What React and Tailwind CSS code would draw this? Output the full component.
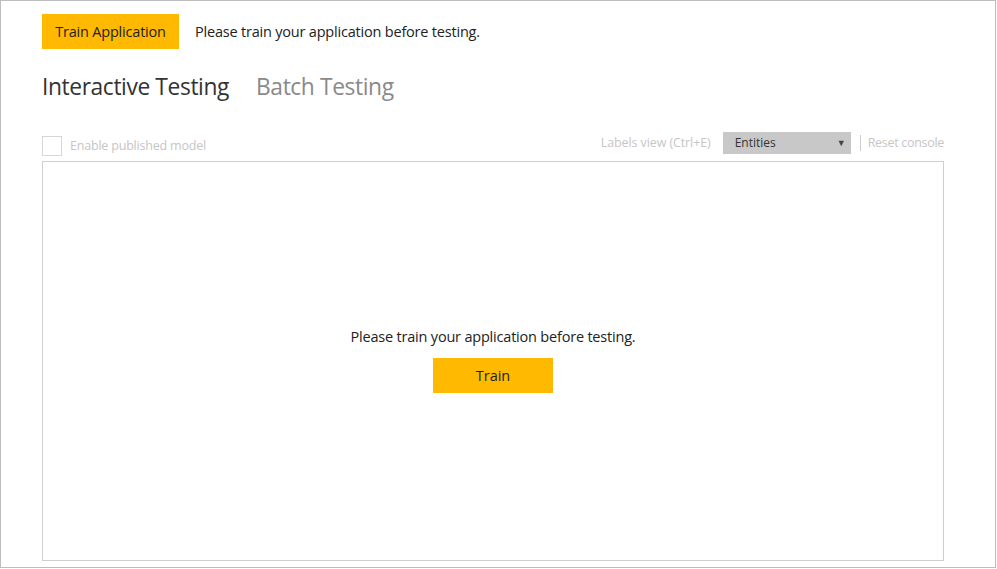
import React from 'react';

const font = { fontFamily: '"Open Sans", "Noto Sans", sans-serif' };

const App = () => {
  return (
    <div className="w-[997px] h-[569px] bg-white" style={font}>
      <div className="w-[996px] h-[568px] border border-[#bdbdbd] flex flex-col pl-[41px] pr-[51px]">
        {/* Train bar */}
        <div className="flex items-center mt-[13px] h-[35px]">
          <button className="h-[35px] w-[137px] bg-[#ffb900] text-[#222] text-[14.5px] tracking-[-0.2px]">
            Train Application
          </button>
          <span className="ml-[16px] text-[14.5px] text-[#222] tracking-[-0.2px]">
            Please train your application before testing.
          </span>
        </div>

        {/* Tabs */}
        <div className="flex items-baseline mt-[21px] h-[36px] text-[22.8px] tracking-[-0.4px]">
          <span className="text-[#333]">Interactive Testing</span>
          <span className="ml-[27px] text-[#8a8a8a]">Batch Testing</span>
        </div>

        {/* Toolbar */}
        <div className="flex items-center justify-between mt-[24px] h-[26px]">
          <div className="flex items-center mt-[6px]">
            <span className="w-[20px] h-[20px] border border-[#d6d6d6]"></span>
            <span className="ml-[8px] text-[12.5px] text-[#c6c6c6] tracking-[-0.2px]">Enable published model</span>
          </div>
          <div className="flex items-center">
            <span className="text-[12.5px] text-[#c6c6c6] tracking-[-0.1px]">Labels view (Ctrl+E)</span>
            <div className="ml-[12px] w-[128px] h-[22px] bg-[#c8c8c8] flex items-center justify-between pl-[12px] pr-[5px]">
              <span className="text-[12px] text-[#333]">Entities</span>
              <span className="text-[9px] text-[#444]">▼</span>
            </div>
            <span className="ml-[9px] w-px h-[16px] bg-[#cfcfcf]"></span>
            <span className="ml-[7px] text-[12.5px] text-[#c6c6c6] tracking-[-0.3px]">Reset console</span>
          </div>
        </div>

        {/* Console */}
        <div className="mt-[5px] h-[400px] border border-[#cfcfcf] flex flex-col items-center justify-center">
          <div className="flex flex-col items-center mb-[3px]">
            <span className="text-[14.5px] text-[#222] tracking-[-0.2px]">Please train your application before testing.</span>
            <button className="mt-[10px] w-[120px] h-[35px] bg-[#ffb900] text-[#222] text-[14.5px]">Train</button>
          </div>
        </div>
      </div>
    </div>
  );
};

export default App;
